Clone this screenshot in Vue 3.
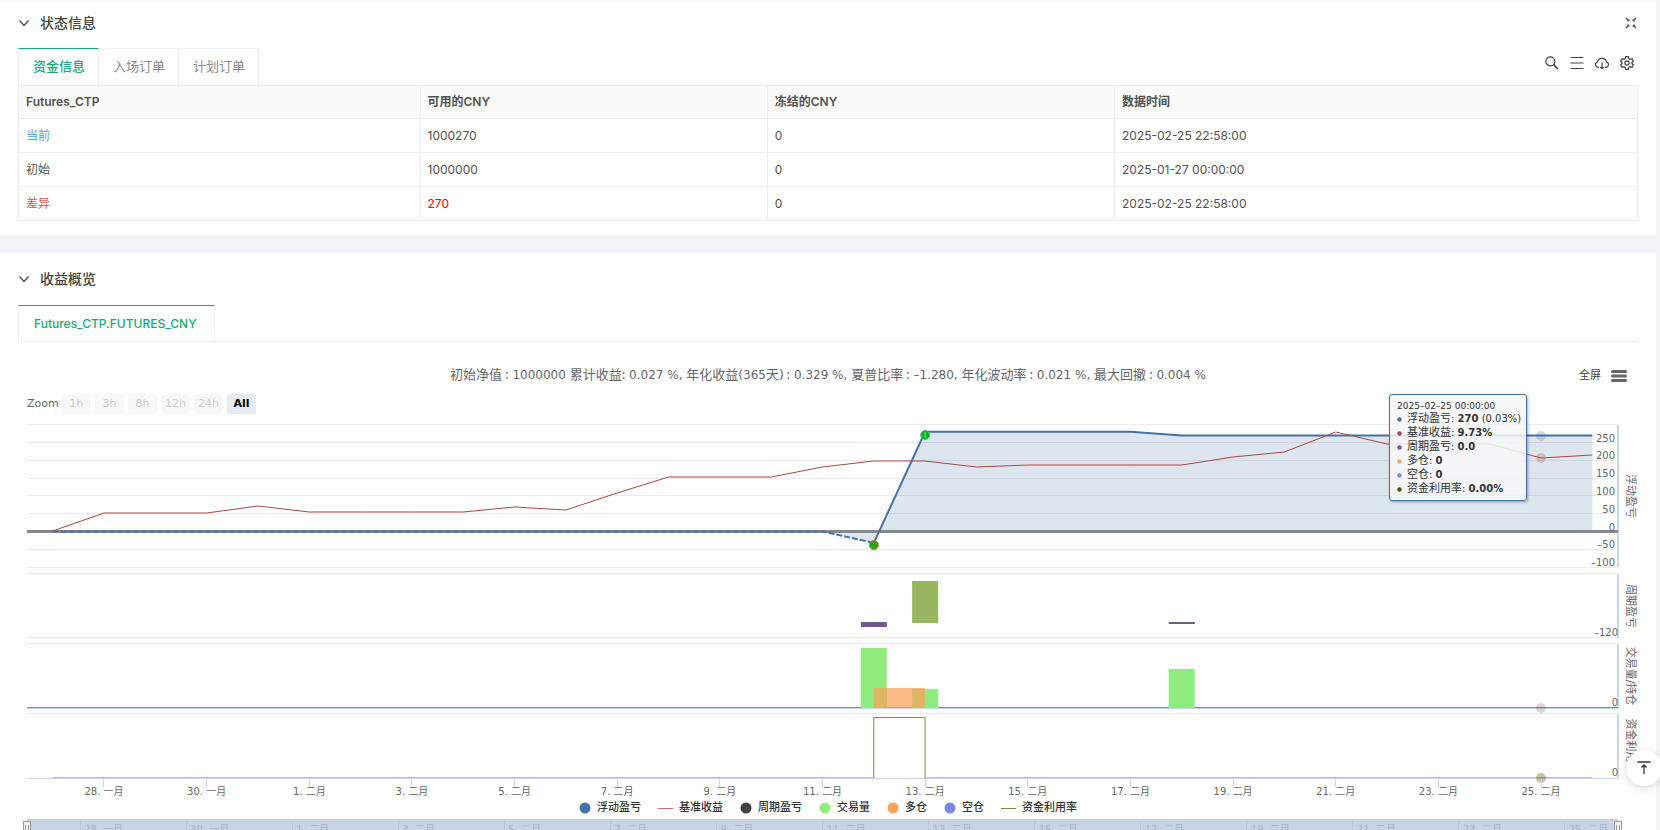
<script setup>
import { ref, computed, onMounted, onBeforeUnmount } from 'vue'

const tabs = ['资金信息', '入场订单', '计划订单']
const activeTab = ref('资金信息')

const columns = ['Futures_CTP', '可用的CNY', '冻结的CNY', '数据时间']
const rows = [
  { name: '当前', tone: 'blue', available: '1000270', frozen: '0', time: '2025-02-25 22:58:00' },
  { name: '初始', tone: '', available: '1000000', frozen: '0', time: '2025-01-27 00:00:00' },
  { name: '差异', tone: 'brick', available: '270', alert: true, frozen: '0', time: '2025-02-25 22:58:00' },
]

const summary = [
  ['初始净值 :', ' 1000000 '],
  ['累计收益:', ' 0.027 %, '],
  ['年化收益', '(365'],
  ['天', ')'],
  [' :', ' 0.329 %, '],
  ['夏普比率 :', ' –1.280, '],
  ['年化波动率 :', ' 0.021 %, '],
  ['最大回撤 :', ' 0.004 %'],
]

const ranges = ['1h', '3h', '8h', '12h', '24h']

const legend = [
  { label: '浮动盈亏', color: '#4572a7', kind: 'dot' },
  { label: '基准收益', color: '#c9706f', kind: 'line' },
  { label: '周期盈亏', color: '#434348', kind: 'dot' },
  { label: '交易量', color: '#90ed7d', kind: 'dot' },
  { label: '多仓', color: '#f7a35c', kind: 'dot' },
  { label: '空仓', color: '#8085e9', kind: 'dot' },
  { label: '资金利用率', color: '#8d8350', kind: 'line' },
]

const tooltip = [
  { label: '浮动盈亏', value: '270', extra: '(0.03%)', color: '#4572a7' },
  { label: '基准收益', value: '9.73%', color: '#aa4643' },
  { label: '周期盈亏', value: '0.0', color: '#71588f' },
  { label: '多仓', value: '0', color: '#f7a35c' },
  { label: '空仓', value: '0', color: '#8085e9' },
  { label: '资金利用率', value: '0.00%', color: '#5c4b00' },
]

/* Chart geometry: one slot per day, 27 Jan to 26 Feb */
const chartEl = ref(null)
const width = ref(1620)
const days = 31
const left = 9
const right = computed(() => width.value - 20)
const slot = computed(() => (right.value - left) / days)
const x = (d) => left + slot.value * (d + 0.5)

const zeroY = 117.5
const y = (v) => zeroY - v * 0.356
const crisp = (v) => Math.floor(v) + 0.5

const grid = [300, 250, 200, 150, 100, 50, -50, -100]
const yLabels = [250, 200, 150, 100, 50, 0, -50, -100]
const minus = (v) => String(v).replace('-', '–')

const pnl = [...Array(16).fill(0), -32, ...Array(5).fill(280), ...Array(9).fill(270)]
const benchmark = [
  117, 99, 99, 99, 92, 98, 98, 98, 98, 93, 96, 79, 63, 63, 63, 53, 47, 47, 53, 51, 51, 51, 51,
  43, 38, 18, 30, 30, 30, 44, 41,
]

const path = (pts) => 'M' + pts.map(([px, py]) => `${px.toFixed(1)} ${py.toFixed(1)}`).join('L')
const pnlPoints = computed(() => pnl.map((v, d) => [x(d), y(v)]))
const dashedPath = computed(() => path(pnlPoints.value.slice(0, 17)))
const solidPath = computed(() => path(pnlPoints.value.slice(16)))
const areaPath = computed(() => path(pnlPoints.value) + `L${x(30)} ${zeroY}L${x(0)} ${zeroY}Z`)
const benchPath = computed(() => path(benchmark.map((py, d) => [x(d), py])))
const usagePath = computed(() => path([[x(16), 364], [x(16), 303.5], [x(17), 303.5], [x(17), 364]]))

const tickLabels = [
  '28. 一月', '30. 一月', '1. 二月', '3. 二月', '5. 二月', '7. 二月', '9. 二月', '11. 二月',
  '13. 二月', '15. 二月', '17. 二月', '19. 二月', '21. 二月', '23. 二月', '25. 二月',
]
const ticks = computed(() => tickLabels.map((label, i) => ({ label, x: x(1 + i * 2) })))
const navTicks = computed(() =>
  tickLabels.map((label, i) => ({ label, x: left + ((right.value - left) / 30) * (1 + i * 2) }))
)
const panels = [
  { top: 159, bottom: 223 },
  { top: 229, bottom: 293 },
  { top: 299, bottom: 363 },
]
const axisTitles = [
  { text: '浮动盈亏', y: 82 },
  { text: '周期盈亏', y: 192 },
  { text: '交易量/持仓', y: 262 },
  { text: '资金利用率', y: 332 },
]
const tooltipLeft = computed(() => x(29) - 152 + 'px')

let observer
onMounted(() => {
  const measure = () => { width.value = chartEl.value.clientWidth }
  measure()
  observer = new ResizeObserver(measure)
  observer.observe(chartEl.value)
})
onBeforeUnmount(() => observer.disconnect())
</script>

<template>
  <main class="page">
    <section class="card">
      <header class="card-head">
        <button class="fold" aria-label="折叠状态信息">
          <svg width="12" height="8" viewBox="0 0 12 8"><path d="M1.5 1.5L6 6.500L10.500 1.500" /></svg>
        </button>
        <h2>状态信息</h2>
        <button class="icon compress" aria-label="收起全屏">
          <svg width="12" height="12" viewBox="0 0 12 12">
            <path d="M1 1L3.500 3.500M11 1L8.500 3.500M1 11L3.500 8.500M11 11L8.500 8.500" />
            <path d="M4 2V4H2M8 2V4H10M4 10V8H2M8 10V8H10" stroke-width=".8" />
          </svg>
        </button>
      </header>

      <div class="tab-row">
        <nav class="tabs" role="tablist">
          <button
            v-for="t in tabs" :key="t" role="tab" class="tab"
            :class="{ active: t === activeTab }" :aria-selected="t === activeTab" @click="activeTab = t"
          >{{ t }}</button>
        </nav>
        <div class="tools">
          <button class="icon" aria-label="搜索">
            <svg width="14" height="14" viewBox="0 0 14 14"><circle cx="5.300" cy="5.300" r="4.500" /><path d="M8.600 8.600L13 13" stroke-width="1.600" /></svg>
          </button>
          <button class="icon" aria-label="列表">
            <svg width="14" height="14" viewBox="0 0 14 14"><path d="M.5 1.500H13.500M.5 7H13.500M.5 12.500H13.500" /></svg>
          </button>
          <button class="icon" aria-label="下载">
            <svg width="14" height="14" viewBox="0 0 14 14">
              <path d="M4 11.300H3.200A2.700 2.700 0 0 1 2.500 6A4.600 4.600 0 0 1 11.500 6A2.700 2.700 0 0 1 10.800 11.300H10" />
              <path d="M7 6.500V12.500M5.300 11L7 12.700L8.700 11" />
            </svg>
          </button>
          <button class="icon" aria-label="设置">
            <svg width="14" height="14" viewBox="0 0 14 14">
              <path d="M5.700 .7H8.300L8.800 2.500L10.200 3.300L12 2.800L13.300 5L12 6.300V7.700L13.300 9L12 11.200L10.200 10.700L8.800 11.500L8.300 13.300H5.700L5.200 11.500L3.800 10.700L2 11.200L.7 9L2 7.700V6.300L.7 5L2 2.800L3.800 3.300L5.200 2.500Z" />
              <circle cx="7" cy="7" r="2.100" />
            </svg>
          </button>
        </div>
      </div>

      <table class="funds">
        <colgroup><col class="c-name" /><col class="c-num" /><col class="c-num" /><col /></colgroup>
        <thead>
          <tr><th v-for="c in columns" :key="c" scope="col">{{ c }}</th></tr>
        </thead>
        <tbody>
          <tr v-for="r in rows" :key="r.name">
            <td :class="r.tone">{{ r.name }}</td>
            <td :class="{ alert: r.alert }">{{ r.available }}</td>
            <td>{{ r.frozen }}</td>
            <td>{{ r.time }}</td>
          </tr>
        </tbody>
      </table>
    </section>

    <section class="card">
      <header class="card-head roomy">
        <button class="fold" aria-label="折叠收益概览">
          <svg width="12" height="8" viewBox="0 0 12 8"><path d="M1.5 1.5L6 6.500L10.500 1.500" /></svg>
        </button>
        <h2>收益概览</h2>
      </header>

      <div class="tab-row lined">
        <nav class="tabs" role="tablist">
          <button class="tab active" role="tab" aria-selected="true">Futures_CTP.FUTURES_CNY</button>
        </nav>
      </div>

      <div ref="chartEl" class="chart">
        <div class="chart-head">
          <p class="summary"><template v-for="[label, value] in summary" :key="label"><span>{{ label }}</span>{{ value }}</template></p>
          <div class="chart-actions">
            <button class="full">全屏</button>
            <button class="icon burger" aria-label="图表菜单">
              <svg width="16" height="12" viewBox="0 0 16 12"><path d="M1.500 1.500H14.500M1.500 6H14.500M1.500 10.500H14.500" /></svg>
            </button>
          </div>
        </div>

        <div class="zoom-row">
          <span class="zoom-label">Zoom</span>
          <button v-for="r in ranges" :key="r" class="range" disabled>{{ r }}</button>
          <button class="range on">All</button>
        </div>

        <svg class="plot" :width="width" height="384" role="img" aria-label="收益概览图表">
          <g class="grid">
            <line v-for="v in grid" :key="v" :x1="left" :x2="right" :y1="crisp(y(v))" :y2="crisp(y(v))" />
          </g>
          <g class="frames">
            <template v-for="p in panels" :key="p.top">
              <line :x1="left" :x2="right" :y1="p.top + 0.5" :y2="p.top + 0.5" />
              <line v-if="p.bottom < 290" :x1="left" :x2="right" :y1="p.bottom + 0.5" :y2="p.bottom + 0.5" />
              <line class="axis" :x1="right" :x2="right" :y1="p.top + 1" :y2="p.bottom + 1" />
            </template>
            <line class="axis" :x1="right" :x2="right" y1="11" y2="153" />
            <line class="axis thin" :x1="left" :x2="right" y1="364.5" y2="364.5" />
          </g>

          <path class="area" :d="areaPath" />
          <line class="zero" :x1="left" :x2="right" :y1="zeroY" :y2="zeroY" />
          <path class="pnl dashed" :d="dashedPath" />
          <path class="pnl" :d="solidPath" />
          <path class="bench" :d="benchPath" />

          <g>
            <circle class="buy" :cx="x(16)" cy="131" r="4.500" />
            <path class="buy-mark" :d="`M${x(16)} 134V129`" />
            <circle class="sell" :cx="x(17)" cy="21" r="4.500" />
            <path class="sell-mark" :d="`M${x(17)} 18V24`" />
          </g>

          <rect class="loss" :x="x(16) - 13" y="208" width="26" height="5" />
          <rect class="gain" :x="x(17) - 13" y="167" width="26" height="42" />
          <rect class="loss" :x="x(22) - 13" y="208" width="26" height="2" />

          <line class="level soft" :x1="left" :x2="right" y1="294.5" y2="294.5" />
          <line class="level" :x1="left" :x2="right" y1="293.5" y2="293.5" />
          <rect class="volume" :x="x(16) - 13" y="234" width="26" height="60" />
          <rect class="volume" :x="x(17) - 13" y="275" width="26" height="19" />
          <rect class="volume" :x="x(22) - 13" y="255" width="26" height="39" />
          <rect class="long" :x="x(16)" y="274" :width="slot" height="20" />

          <line class="usage idle" :x1="x(0)" :x2="x(16)" y1="363.5" y2="363.5" />
          <line class="usage idle" :x1="x(17)" :x2="x(30)" y1="363.5" y2="363.5" />
          <path class="usage" :d="usagePath" />

          <circle class="halo" :cx="x(29)" cy="22" r="5" fill="#4572a7" />
          <circle class="halo" :cx="x(29)" cy="44" r="5" fill="#aa4643" />
          <circle class="halo" :cx="x(29)" cy="294" r="5" fill="#80508f" />
          <circle class="halo dark" :cx="x(29)" cy="364" r="5" fill="#5c4b00" />

          <g class="labels">
            <text v-for="v in yLabels" :key="v" :x="right - 3" :y="y(v) - 1" text-anchor="end">{{ minus(v) }}</text>
            <text :x="right" y="222" text-anchor="end">–120</text>
            <text :x="right" y="292" text-anchor="end">0</text>
            <text :x="right" y="362" text-anchor="end">0</text>
            <template v-for="t in ticks" :key="t.label">
              <line class="tick" :x1="crisp(t.x)" :x2="crisp(t.x)" y1="365" y2="373" />
              <text :x="t.x" y="381" text-anchor="middle">{{ t.label }}</text>
            </template>
          </g>
          <g class="titles">
            <text
              v-for="a in axisTitles" :key="a.text" text-anchor="middle"
              :transform="`translate(${width - 11} ${a.y}) rotate(90)`"
            >{{ a.text }}</text>
          </g>
        </svg>

        <ul class="legend">
          <li v-for="l in legend" :key="l.label">
            <button>
              <svg v-if="l.kind === 'dot'" width="12" height="12"><circle cx="6" cy="6" r="5.500" :fill="l.color" /></svg>
              <svg v-else width="15" height="12"><path d="M0 6.500H15" :stroke="l.color" /></svg>
              {{ l.label }}
            </button>
          </li>
        </ul>

        <svg class="navigator" :width="width" height="40" role="img" aria-label="时间导航">
          <rect class="nav-fill" :x="left" y="1" :width="right - left" height="39" />
          <line class="nav-top" :x1="left" :x2="right" y1="1.500" y2="1.500" />
          <g v-for="t in navTicks" :key="t.label">
            <line class="nav-tick" :x1="crisp(t.x)" :x2="crisp(t.x)" y1="2" y2="40" />
            <text :x="t.x + 4" y="15">{{ t.label }}</text>
          </g>
          <g v-for="hx in [left, right]" :key="hx" class="handle">
            <rect :x="crisp(hx) - 4" y="3.500" width="7" height="14" />
            <path :d="`M${crisp(hx) - 2} 7V15M${crisp(hx) + 1} 7V15`" />
          </g>
        </svg>

        <div class="tooltip" :style="{ left: tooltipLeft }">
          <time>2025–02–25 00:00:00</time>
          <p v-for="t in tooltip" :key="t.label">
            <svg width="5" height="5"><circle cx="2.500" cy="2.500" r="2.200" :fill="t.color" /></svg>
            <span><span class="name">{{ t.label }}</span>: <b>{{ t.value }}</b> {{ t.extra }}</span>
          </p>
        </div>
      </div>
    </section>

    <button class="to-top" aria-label="回到顶部">
      <svg width="14" height="14" viewBox="0 0 14 14"><path d="M.5 1H13.500M7 13V4M4.500 6.500L7 4L9.500 6.500" /></svg>
    </button>
  </main>
</template>

<style>
html,
body {
  margin: 0;
  background: #f4f5f7;
}
</style>

<style scoped>
.page {
  box-sizing: border-box;
  height: 100vh;
  overflow-y: auto;
  scrollbar-width: none;
  padding: 1px 4px 0 0;
  display: flex;
  flex-direction: column;
  gap: 18px;
  font: 12px/18px Inter, "Noto Sans CJK SC", sans-serif;
  color: #515151;
}

button {
  margin: 0;
  padding: 0;
  border: 0;
  background: none;
  font: inherit;
  color: inherit;
  cursor: pointer;
}

svg {
  display: block;
  flex: none;
}

.card {
  flex: none;
  background: #fff;
  padding: 0 18px 14px;
}

.card-head {
  display: flex;
  align-items: center;
  height: 43px;
  padding-bottom: 4px;
}

.card-head.roomy {
  height: 52px;
  padding-bottom: 0;
}

.card-head h2 {
  margin: 0 auto 0 10px;
  font-size: 14px;
  line-height: 20px;
  font-weight: 500;
  color: #444;
}

.fold svg,
.icon svg {
  fill: none;
  stroke: #444;
  stroke-width: 1.2;
}

.compress {
  margin-right: 1px;
}

.tab-row {
  display: flex;
  justify-content: space-between;
}

.tab-row.lined {
  border-bottom: 1px solid #ebedf0;
}

.tabs {
  display: flex;
}

.tab {
  box-sizing: border-box;
  height: 37px;
  padding: 0 13px 2px 14px;
  border: 1px solid #f0f0f0;
  border-left-width: 0;
  border-bottom: 0;
  font-size: 13px;
  line-height: 20px;
  color: #8a8a8a;
}

.tab:first-child {
  border-left-width: 1px;
}

.tab.active {
  border-top-color: #18a873;
  color: #18a873;
  font-weight: 500;
}

.lined .tab {
  height: 36px;
  padding: 0 17px 0 15px;
  font-size: 12px;
}

.tools {
  display: flex;
  align-items: center;
  gap: 11px;
  padding: 0 4px 8px 0;
}

.funds {
  width: 100%;
  table-layout: fixed;
  border-collapse: collapse;
}

.c-name {
  width: 24.8%;
}

.c-num {
  width: 21.45%;
}

.funds th,
.funds td {
  box-sizing: border-box;
  height: 34px;
  padding: 0 7px;
  border: 1px solid #ededee;
  text-align: left;
}

.funds th {
  height: 33px;
  background: #fafafa;
  font-weight: 600;
}

.blue {
  color: #5a9cf0;
}

.brick {
  color: #d9534f;
}

.alert {
  color: #f00;
}

.chart {
  position: relative;
  font-family: "DejaVu Sans", "Noto Sans CJK SC", sans-serif;
}

.chart-head {
  position: relative;
  display: flex;
  justify-content: center;
  padding-top: 22px;
}

.summary {
  height: 20px;
  margin: 0;
  font-size: 12px;
  line-height: 20px;
  color: #666;
  white-space: pre;
}

.summary span {
  font-family: "Noto Sans CJK SC", sans-serif;
  font-size: 13px;
}

.chart-actions {
  position: absolute;
  right: 11px;
  top: 24px;
  display: flex;
  align-items: center;
  gap: 10px;
}

.full {
  font-size: 11px;
  line-height: 20px;
  color: #444;
}

.burger svg {
  stroke: #666;
  stroke-width: 3;
  stroke-linecap: round;
}

.zoom-row {
  display: flex;
  align-items: center;
  gap: 4px;
  padding: 10px 0 0 9px;
  font-size: 11px;
  line-height: 20px;
  color: #666;
}

.zoom-label {
  width: 31px;
}

.range {
  width: 29px;
  height: 20px;
  border-radius: 2px;
  background: #f7f7f7;
  color: #ccc;
}

.range.on {
  background: #e6ebf5;
  color: #000;
  font-weight: 700;
}

.grid line,
.frames line {
  stroke: #ebebeb;
}

.frames .axis {
  stroke: #ccd6eb;
  stroke-width: 2;
}

.frames .thin {
  stroke-width: 1;
}

.zero {
  stroke: #86888c;
  stroke-width: 3;
}

.area {
  fill: #4572a7;
  fill-opacity: 0.18;
}

.pnl {
  fill: none;
  stroke: #4572a7;
  stroke-width: 2;
}

.dashed {
  stroke-dasharray: 6 2;
}

.bench {
  fill: none;
  stroke: #aa4643;
  stroke-width: 1;
}

.buy,
.sell {
  fill: #0cb80c;
}

.buy {
  stroke: #e8604c;
}

.sell {
  stroke: #4bb0c8;
}

.buy-mark {
  stroke: #c8582c;
}

.sell-mark {
  stroke: #8fd08f;
}

.loss {
  fill: #71588f;
}

.gain {
  fill: #98b560;
}

.volume {
  fill: #90ed7d;
}

.long {
  fill: #f7a35c;
  fill-opacity: 0.75;
}

.level {
  stroke: #3d9fcf;
}

.level.soft {
  stroke: #ccd6eb;
}

.usage {
  fill: none;
  stroke: #8d8350;
  stroke-width: 1;
}

.usage.idle {
  stroke: #c2bda3;
}

.halo {
  fill-opacity: 0.25;
}

.halo.dark {
  fill-opacity: 0.35;
}

.labels text {
  font-size: 10px;
  fill: #666;
}

.tick {
  stroke: #ccd6eb;
}

.titles text {
  font-size: 11px;
  fill: #666;
}

.legend {
  display: flex;
  justify-content: center;
  gap: 17px;
  height: 20px;
  margin: 0;
  padding: 0;
  list-style: none;
  font-size: 11px;
  line-height: 20px;
  font-weight: 500;
  color: #333;
}

.legend button {
  display: flex;
  align-items: center;
  gap: 6px;
}

.nav-fill {
  fill: #c8d4e5;
}

.nav-top {
  stroke: #ccc;
}

.nav-tick {
  stroke: #bcc8da;
}

.navigator text {
  font-size: 10px;
  fill: #a5b0c1;
}

.handle rect {
  fill: #f2f2f2;
  stroke: #999;
}

.handle path {
  stroke: #999;
}

.tooltip {
  position: absolute;
  top: 52px;
  box-sizing: border-box;
  width: 138px;
  height: 107px;
  padding: 5px 7px;
  border: 1px solid #4572a7;
  border-radius: 3px;
  background: rgba(247, 247, 247, 0.85);
  box-shadow: 1px 1px 3px rgba(0, 0, 0, 0.35);
  color: #333;
  white-space: nowrap;
}

.tooltip time {
  display: block;
  font-size: 9px;
  line-height: 12px;
}

.tooltip p {
  display: flex;
  align-items: center;
  gap: 5px;
  height: 14px;
  margin: 0;
  font-size: 10px;
  line-height: 14px;
}

.tooltip .name {
  font-size: 11px;
}

.to-top {
  position: fixed;
  right: -2px;
  top: 750px;
  display: flex;
  align-items: center;
  justify-content: center;
  width: 36px;
  height: 36px;
  border-radius: 50%;
  background: #fff;
  box-shadow: 0 2px 8px rgba(0, 0, 0, 0.15);
}

.to-top svg {
  fill: none;
  stroke: #333;
  stroke-width: 1.3;
}
</style>
